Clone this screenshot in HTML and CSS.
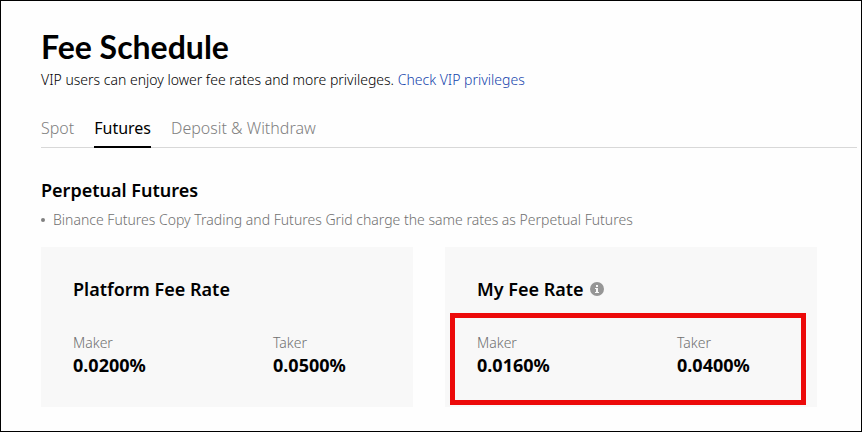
FILE: index.html
```html
<!DOCTYPE html>
<html lang="en">
<head>
    <meta charset="UTF-8">
    <meta name="viewport" content="width=device-width, initial-scale=1.0">
    <title>Fee Schedule</title>
    <link rel="stylesheet" href="styles.css">
</head>
<body>
    <main class="page">
        <h1>Fee Schedule</h1>
        <p class="intro">VIP users can enjoy lower fee rates and more privileges. <a href="#vip">Check VIP privileges</a></p>

        <nav class="tabs">
            <a href="#spot">Spot</a>
            <a href="#futures" class="active">Futures</a>
            <a href="#deposit">Deposit &amp; Withdraw</a>
        </nav>

        <h2>Perpetual Futures</h2>
        <ul class="notes">
            <li>Binance Futures Copy Trading and Futures Grid charge the same rates as Perpetual Futures</li>
        </ul>

        <div class="cards">
            <section class="card">
                <h3>Platform Fee Rate</h3>
                <dl class="rates">
                    <div>
                        <dt>Maker</dt>
                        <dd>0.0200%</dd>
                    </div>
                    <div>
                        <dt>Taker</dt>
                        <dd>0.0500%</dd>
                    </div>
                </dl>
            </section>
            <section class="card">
                <h3>My Fee Rate
                    <svg class="info" viewBox="0 0 14 14" aria-hidden="true">
                        <circle cx="7" cy="7" r="7" fill="#969696"/>
                        <path d="M6 3h2v2H6zM5 6h3v4h1v1H5v-1h1V7H5z" fill="#f8f8f8"/>
                    </svg>
                </h3>
                <dl class="rates highlight">
                    <div>
                        <dt>Maker</dt>
                        <dd>0.0160%</dd>
                    </div>
                    <div>
                        <dt>Taker</dt>
                        <dd>0.0400%</dd>
                    </div>
                </dl>
            </section>
        </div>
    </main>
</body>
</html>
```
FILE: styles.css
```css
* {
    box-sizing: border-box;
}
body {
    margin: 0;
    font-family: "Noto Sans", sans-serif;
    font-size: 14px;
    font-weight: 300;
    line-height: 20px;
    color: #000;
    background: #fefefe;
}
h1, h2, h3, p, ul, dl, dd {
    margin: 0;
    padding: 0;
}
h2, h3 {
    font-size: 18px;
    font-weight: 600;
    line-height: 24px;
}
.page {
    min-height: 100vh;
    border: 1px solid #000;
    padding: 26px 4px 24px 40px;
}
h1 {
    font-family: Lato, sans-serif;
    font-size: 32px;
    font-weight: 700;
    line-height: 40px;
}
.intro {
    margin-top: 3px;
}
.intro a {
    color: #1444ac;
    text-decoration: none;
}
.tabs {
    display: flex;
    gap: 20px;
    margin-top: 28px;
    border-bottom: 1px solid #d8d8d8;
}
.tabs a {
    margin-bottom: -1px;
    padding-bottom: 8px;
    border-bottom: 2px solid transparent;
    font-size: 16px;
    color: #808080;
    text-decoration: none;
}
.tabs .active {
    border-color: #000;
    color: #000;
    font-weight: 400;
}
h2 {
    margin-top: 30px;
}
.notes {
    margin-top: 8px;
    list-style: none;
    color: #707070;
}
.notes li {
    display: flex;
    align-items: center;
    gap: 8px;
}
.notes li::before {
    content: "";
    width: 4px;
    height: 4px;
    border-radius: 50%;
    background: #808080;
}
.cards {
    display: grid;
    grid-template-columns: 1fr 1fr;
    gap: 32px;
    margin: 17px 40px 0 0;
}
.card {
    padding: 30px 32px;
    background: #f8f8f8;
}
h3 {
    display: flex;
    align-items: center;
    gap: 6px;
}
.info {
    width: 14px;
    height: 14px;
}
.rates {
    position: relative;
    display: grid;
    grid-template-columns: 200px 1fr;
    margin-top: 32px;
}
.rates dt {
    color: #707070;
}
.rates dd {
    font-size: 18px;
    font-weight: 700;
    line-height: 24px;
}
/* red frame round the user's own rates */
.highlight::after {
    content: "";
    position: absolute;
    inset: -20px -21px -28px -27px;
    border: 5px solid #ec0a0a;
}
```
